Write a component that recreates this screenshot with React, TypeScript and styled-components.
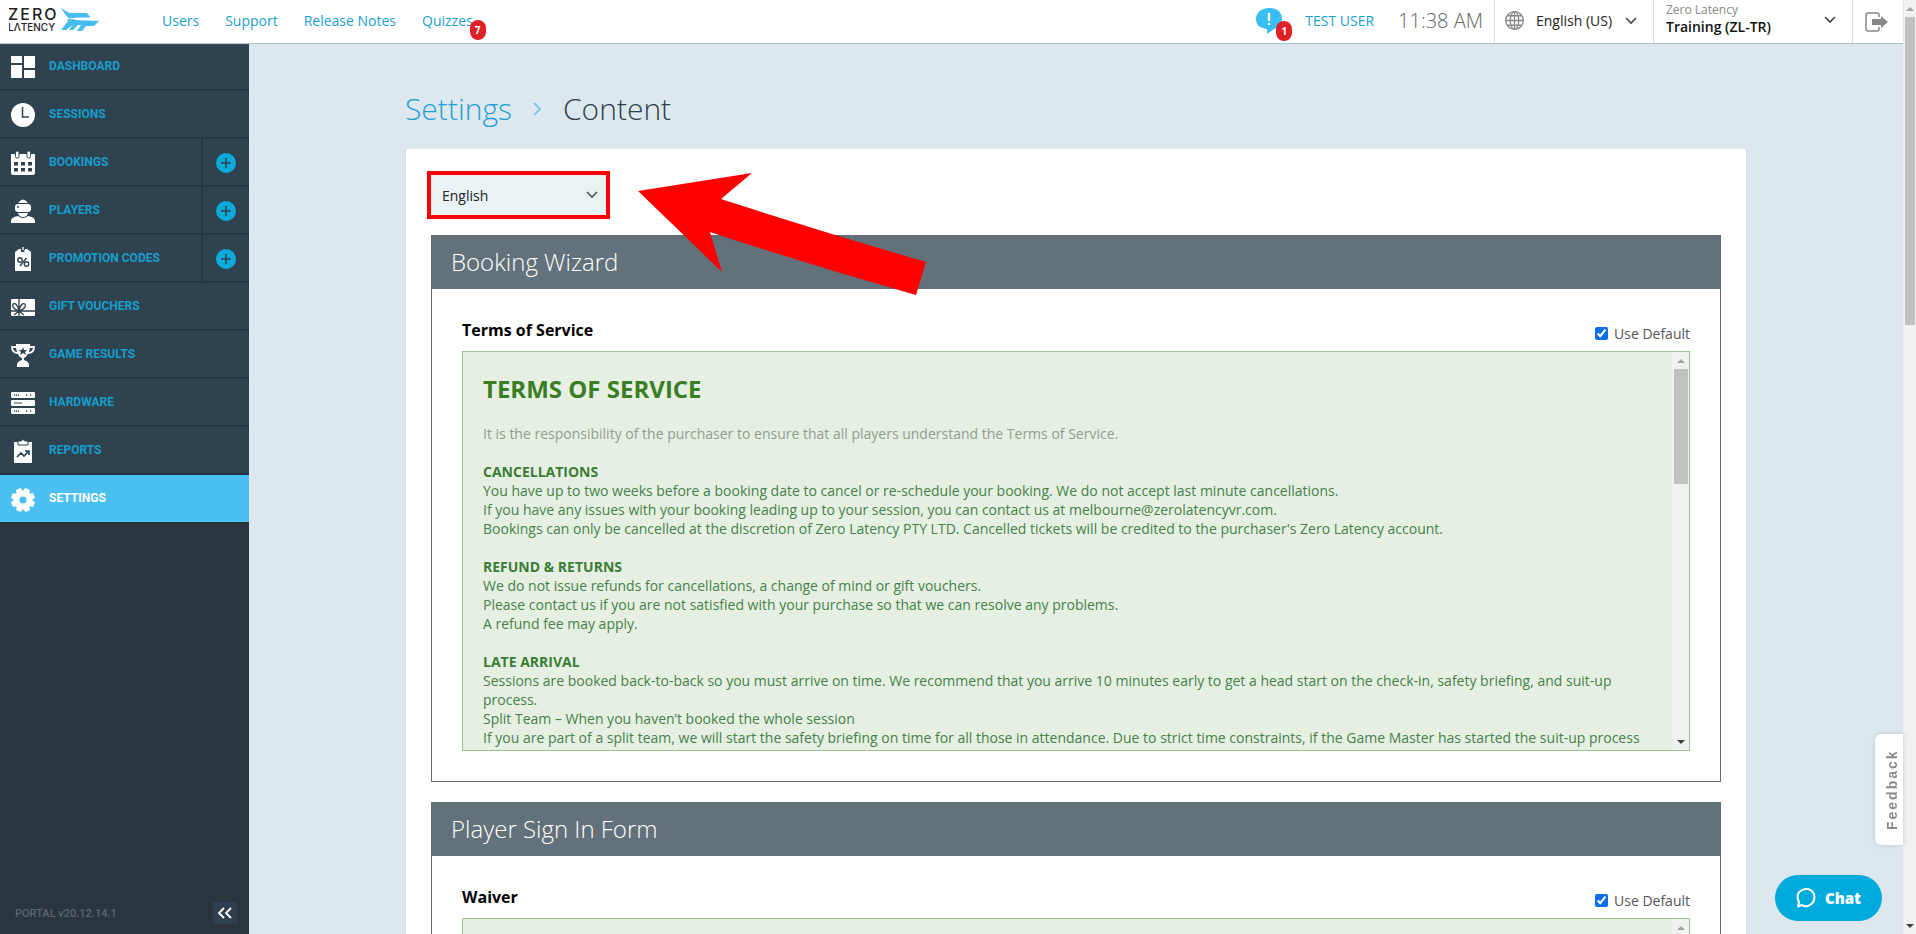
import React from "react";
import styled, { createGlobalStyle, css } from "styled-components";

const sans = `"Open Sans", "Noto Sans", sans-serif`;

const GlobalStyle = createGlobalStyle`
  *, *::before, *::after { box-sizing: border-box; }
  body { margin: 0; font-family: ${sans}; font-size: 14px; line-height: 19px; color: #333; background: #dde8ee; }
  h1, h2, h3, h4, p { margin: 0; }
  button { font: inherit; border: 0; padding: 0; cursor: pointer; }
  a { text-decoration: none; }
`;

/* ---------- shell ---------- */
const Window = styled.div`
  display: flex;
  height: 100vh;
  overflow: hidden;
`;
const Shell = styled.div`
  flex: 1;
  min-width: 0;
  display: flex;
  flex-direction: column;
`;
const Body = styled.div`
  flex: 1;
  min-height: 0;
  display: flex;
`;

/* ---------- scroll bars ---------- */
const Track = styled.div<{ $inner?: boolean }>`
  flex: none;
  display: flex;
  flex-direction: column;
  align-items: center;
  width: ${(p) => (p.$inner ? 17 : 13)}px;
  background: #f1f1f1;
`;
const Thumb = styled.div<{ $size: number }>`
  width: calc(100% - 3px);
  height: ${(p) => p.$size}%;
  background: #c1c1c1;
`;
const Spacer = styled.div`
  flex: 1;
`;
const Step = styled.button`
  display: grid;
  place-items: center;
  width: 100%;
  height: 17px;
  background: transparent;
`;

function ScrollBar({ size, inner }: { size: number; inner?: boolean }) {
  return (
    <Track $inner={inner}>
      <Step aria-label="Scroll up">
        <svg width="8" height="4" viewBox="0 0 8 4"><path d="M0 4 4 0l4 4z" fill="#a3a3a3" /></svg>
      </Step>
      <Thumb $size={size} />
      <Spacer />
      <Step aria-label="Scroll down">
        <svg width="8" height="4" viewBox="0 0 8 4"><path d="M0 0l4 4 4-4z" fill="#404040" /></svg>
      </Step>
    </Track>
  );
}

/* ---------- header ---------- */
const Header = styled.header`
  position: relative;
  z-index: 2;
  flex: none;
  display: flex;
  height: 43px;
  background: #fff;
  box-shadow: 0 1px 1px #b4c4ce;
`;
const LogoLink = styled.a`
  width: 162px;
  padding: 1px 0 0 9px;
`;
const TopNav = styled.nav`
  flex: 1;
  display: flex;
  align-items: center;
  gap: 26px;
  padding-bottom: 2px;
`;
const TopLink = styled.a`
  position: relative;
  color: #1a9fd0;
`;
const Badge = styled.span`
  position: absolute;
  right: -13px;
  bottom: -10px;
  display: grid;
  place-items: center;
  width: 16px;
  height: 20px;
  border-radius: 8px;
  background: #e01f26;
  color: #fff;
  font-size: 10px;
  font-weight: 700;
`;
const Notice = styled.button`
  position: relative;
  width: 27px;
  margin-right: 22px;
  background: transparent;

  svg { display: block; margin-top: -2px; }
  ${Badge} { right: -9px; bottom: 2px; }
`;
const UserLink = styled.a`
  align-self: center;
  margin-right: 24px;
  padding-bottom: 2px;
  color: #1a9fd0;
`;
const Clock = styled.span`
  align-self: center;
  margin-right: 11px;
  padding-bottom: 3px;
  font-size: 20px;
  font-weight: 300;
  color: #666;
`;
const Cell = styled.div<{ $width: number }>`
  display: flex;
  align-items: center;
  width: ${(p) => p.$width}px;
  padding: 0 12px;
  border-left: 1px solid #d9dde0;
`;
const PlainSelect = styled.select`
  flex: 1;
  min-width: 0;
  appearance: none;
  border: 0;
  padding: 0;
  background: transparent;
  font: 14px/19px ${sans};
  color: #222;
`;
const LanguageCell = styled(Cell)`
  gap: 12px;
  padding: 0 16px 2px 10px;
`;
const SiteCell = styled(Cell)`
  padding-right: 16px;

  > svg { margin-bottom: 4px; }
`;
const Site = styled.label`
  flex: 1;
  display: flex;
  flex-direction: column;
  font-size: 12px;
  line-height: 14px;
  padding-bottom: 4px;
  color: #888;

  ${PlainSelect} { font-weight: 600; line-height: 19px; color: #111; }
`;
const LogoutButton = styled.button`
  display: grid;
  place-items: center;
  background: transparent;
`;

const Chevron = ({ color = "#444" }: { color?: string }) => (
  <svg width="12" height="8" viewBox="0 0 12 8" fill="none" stroke={color} strokeWidth="1.6">
    <path d="M1 1l5 5 5-5" />
  </svg>
);

const Logo = () => (
  <svg width="92" height="34" viewBox="0 -6 92 34">
    <g fill="#222" fontFamily="Inter, sans-serif" fontWeight="500">
      <text x="-1" y="13" fontSize="16" letterSpacing="2">ZERO</text>
      <text x="-1" y="24" fontSize="10">LΛTENCY</text>
    </g>
    <g fill="#45bdee">
      <path d="M52 1l8 5h18l4 5H65l-5 2z" />
      <path d="M52 23l7-9 5-1 26 1-5 5h-8l-4 5h-5l4-6h-3l-5 5h-4l4-5-7 5z" />
    </g>
    <path d="M54 6l6 6 8-1h15" fill="none" stroke="#fff" />
    <path d="M58 13h8" stroke="#1b9bd0" />
  </svg>
);

/* ---------- sidebar ---------- */
const Sidebar = styled.aside`
  flex: none;
  display: flex;
  flex-direction: column;
  justify-content: space-between;
  width: 249px;
  background: #2b353e;
`;
const Menu = styled.ul`
  margin: 0;
  padding: 0;
  list-style: none;
`;
const MenuItem = styled.li<{ $active?: boolean }>`
  display: flex;
  height: 48px;
  border-bottom: 2px solid #253641;
  background: #2e4250;
  ${(p) => p.$active && css`
    border-bottom: 0;
    height: 47px;
    background: #4bc0f0;
    ${MenuLink} { color: #fff; }
  `}
`;
const MenuLink = styled.a`
  flex: 1;
  display: flex;
  align-items: center;
  gap: 14px;
  padding-left: 11px;
  color: #179ecb;
  font-family: Roboto, sans-serif;
  font-size: 12px;
  font-weight: 700;

  svg { flex: none; margin-top: 2px; }
`;
const AddButton = styled.button`
  display: grid;
  place-items: center;
  width: 48px;
  padding-top: 2px;
  border-left: 2px solid #253641;
  background: transparent;
`;
const SidebarFoot = styled.footer`
  display: flex;
  align-items: center;
  justify-content: space-between;
  padding: 0 12px 10px 15px;
  color: #5c6770;
  font-family: Roboto, sans-serif;
  font-size: 11px;
  font-weight: 500;
`;
const CollapseButton = styled.button`
  display: grid;
  place-items: center;
  width: 24px;
  height: 22px;
  background: #2f3f4d;
`;

const ink = "#2e4250";
const icons: Record<string, React.ReactNode> = {
  dashboard: <path d="M0 1h11v7H0zM13 1h11v12H13zM0 10h11v13H0zM13 15h11v8H13z" />,
  sessions: (
    <>
      <circle cx="12" cy="12" r="12" />
      <path d="M11.500 4v10H18" fill="none" stroke={ink} strokeWidth="1.5" />
    </>
  ),
  bookings: (
    <>
      <path d="M0 3h24v19q0 2-2 2H2q-2 0-2-2z" />
      <rect x="4.500" y="0" width="3.500" height="7" rx="1.500" stroke={ink} />
      <rect x="16" y="0" width="3.500" height="7" rx="1.500" stroke={ink} />
      <path d="M3 11h4v3.500H3zM10 11h4v3.500h-4zM17 11h4v3.500h-4zM3 17h4v3.500H3zM10 17h4v3.500h-4zM17 17h4v3.500h-4z" fill={ink} />
    </>
  ),
  players: (
    <>
      <path d="M7 4q5-7 10 0z" />
      <rect x="4" y="5" width="16" height="8" rx="3" />
      <path d="M7 14h10q-1 4-5 4t-5-4z" />
      <path d="M0 24v-2q0-4 7-5 5 4 10 0 7 1 7 5v2z" />
      <circle cx="7" cy="8" r="1" fill={ink} />
    </>
  ),
  promotions: (
    <>
      <path d="M4 5l4-3h8l4 3v19H4z" />
      <path d="M12 0v5" stroke={ink} strokeWidth="4" />
      <path d="M12 0v3M10 5q0 2 2 2t2-2V3" fill="none" stroke="#fff" strokeWidth="1.3" />
      <g fill="none" stroke={ink} strokeWidth="1.4">
        <circle cx="9" cy="13" r="2.200" /><circle cx="15.500" cy="17" r="2.200" /><path d="M15.500 11l-6.500 8" />
      </g>
    </>
  ),
  vouchers: (
    <>
      <rect y="4" width="24" height="17" rx="1" />
      <path d="M8 4v17M0 16h24M8 16Q0 13 2 9q4-2 6 7 2-9 6-7 2 4-6 7l-5 4M8 16l5 4" fill="none" stroke={ink} strokeWidth="1.3" />
    </>
  ),
  results: (
    <>
      <path d="M5 1h14v2h5q0 8-7 8-2 3-4 4v2q4 1 5 4v3H6v-3q1-3 5-4v-2q-3-1-4-4-7 0-7-8h5z" />
      <path d="M2 5h3l1 4Q3 9 2 5zM22 5h-3l-1 4q3 0 4-4z" fill={ink} />
      <path d="M12 4l1 3h3l-2 2 1 3-3-2-3 2 1-3-2-2h3z" fill={ink} />
    </>
  ),
  hardware: (
    <>
      <rect y="1" width="24" height="6" rx="1" />
      <rect y="9" width="24" height="6" rx="1" />
      <rect y="17" width="24" height="6" rx="1" />
      <path d="M3 4h5M15 4h2M19 4h2M3 20h5M15 20h2M19 20h2" stroke={ink} strokeWidth="1.6" strokeDasharray="1.2 .8" />
      <path d="M3 12h8" stroke={ink} />
    </>
  ),
  reports: (
    <>
      <path d="M3 3h18v21H3z" />
      <path d="M7 2h3q2-3 4 0h3v4H7z" stroke={ink} />
      <path d="M6 18l4-4 3 3 5-5M14 12h4v4" fill="none" stroke={ink} strokeWidth="1.6" />
    </>
  ),
  settings: (
    <>
      <circle cx="12" cy="12" r="9.500" />
      {[22, 67, 112, 157, 202, 247, 292, 337].map((a) => (
        <rect key={a} x="9" y="0" width="6" height="6" rx="1.500" transform={`rotate(${a} 12 12)`} />
      ))}
      <circle cx="12" cy="12" r="3.600" fill="#4bc0f0" />
    </>
  ),
};

const menu = [
  { icon: "dashboard", label: "DASHBOARD" },
  { icon: "sessions", label: "SESSIONS" },
  { icon: "bookings", label: "BOOKINGS", add: true },
  { icon: "players", label: "PLAYERS", add: true },
  { icon: "promotions", label: "PROMOTION CODES", add: true },
  { icon: "vouchers", label: "GIFT VOUCHERS" },
  { icon: "results", label: "GAME RESULTS" },
  { icon: "hardware", label: "HARDWARE" },
  { icon: "reports", label: "REPORTS" },
  { icon: "settings", label: "SETTINGS", active: true },
];

/* ---------- content ---------- */
const Main = styled.main`
  flex: 1;
  min-width: 0;
  overflow: hidden;
`;
const Column = styled.div`
  max-width: 1342px;
  margin: 0 auto;
`;
const Crumbs = styled.nav`
  display: flex;
  align-items: center;
  gap: 21px;
  height: 106px;
  padding-top: 26px;
  font-size: 30px;
  line-height: 40px;
  font-weight: 300;

  a { color: #1f9fd6; }
  h1 { font: inherit; color: #2d3e4c; }
`;
const Card = styled.section`
  display: flex;
  flex-direction: column;
  gap: 20px;
  padding: 26px 25px;
  border: 1px solid #d0dde5;
  border-top: 0;
  background: #fff;
`;
const Picker = styled.div`
  position: relative;
  align-self: flex-start;
  display: flex;
  align-items: center;
  width: 175px;
  height: 40px;
  padding: 0 8px 0 11px;
  outline: 4px solid #f00;
  background: #e9f2f5;
`;
const Pointer = styled.svg`
  position: absolute;
  left: 206px;
  top: -4px;
  width: 290px;
  height: 126px;
  pointer-events: none;
`;
const Panel = styled.section`
  border: 1px solid #5f6e75;
`;
const PanelTitle = styled.h2`
  padding: 9px 19px 11px;
  background: #62717a;
  color: #fff;
  font-size: 24px;
  font-weight: 300;
  line-height: 33px;
`;
const PanelBody = styled.div`
  padding: 29px 30px 30px;
`;
const FieldHead = styled.div`
  display: flex;
  justify-content: space-between;
  align-items: flex-start;
  height: 33px;

  h3 { font-size: 16px; font-weight: 700; line-height: 24px; color: #000; }
`;
const Check = styled.label`
  display: flex;
  align-items: center;
  gap: 6px;
  padding-top: 6px;
  color: #555;

  input { width: 13px; height: 13px; margin: 0; accent-color: #0d6fe8; }
`;
const Document = styled.div`
  display: flex;
  height: 400px;
  border: 1px solid #9dc38f;
  background: #e5f0e3;
  color: #47804a;
`;
const DocumentText = styled.div`
  flex: 1;
  min-width: 0;
  overflow: hidden;
  padding: 20px;

  h3 { margin-bottom: 19px; font-size: 24px; line-height: 33px; color: #3a7d25; }
  h4 { font-size: 14px; line-height: 19px; color: #3a7d35; }
  p { margin-bottom: 19px; }
`;
const Intro = styled.p`
  color: #939b90;
`;

/* ---------- floating controls ---------- */
const FeedbackTab = styled.button`
  position: fixed;
  right: 13px;
  bottom: 89px;
  width: 28px;
  height: 111px;
  padding-right: 7px;
  border-radius: 0 6px 6px 0;
  background: #fff;
  box-shadow: 0 0 5px #b9c6ce;
  color: #8a8a8a;
  font-family: "Liberation Sans", sans-serif;
  font-weight: 700;
  letter-spacing: 2px;
  line-height: 14px;
  writing-mode: vertical-rl;
  transform: rotate(180deg);
`;
const ChatButton = styled.button`
  position: fixed;
  right: 34px;
  bottom: 13px;
  display: flex;
  align-items: center;
  justify-content: center;
  gap: 9px;
  width: 107px;
  height: 46px;
  border-radius: 23px;
  background: #00abdc;
  color: #fff;
  font-size: 15px;
  font-weight: 800;
`;

function Section({ title, field, children }: { title: string; field: string; children?: React.ReactNode }) {
  return (
    <Panel>
      <PanelTitle>{title}</PanelTitle>
      <PanelBody>
        <FieldHead>
          <h3>{field}</h3>
          <Check><input type="checkbox" defaultChecked />Use Default</Check>
        </FieldHead>
        <Document>
          <DocumentText>{children}</DocumentText>
          <ScrollBar size={29} inner />
        </Document>
      </PanelBody>
    </Panel>
  );
}

export default function App() {
  return (
    <Window>
      <GlobalStyle />
      <Shell>
        <Header>
          <LogoLink href="#" aria-label="Zero Latency"><Logo /></LogoLink>
          <TopNav>
            <TopLink href="#">Users</TopLink>
            <TopLink href="#">Support</TopLink>
            <TopLink href="#">Release Notes</TopLink>
            <TopLink href="#">Quizzes<Badge>7</Badge></TopLink>
          </TopNav>
          <Notice aria-label="Notifications">
            <svg width="27" height="26" viewBox="0 0 27 26">
              <path d="M13 0C21 0 26 4 26 11S21 20 18 21l-7 5V21C4 20 0 17 0 11S5 0 13 0z" fill="#38bdf5" />
              <path d="M13 5v8M13 15v2" stroke="#fff" strokeWidth="2.4" />
            </svg>
            <Badge>1</Badge>
          </Notice>
          <UserLink href="#">TEST USER</UserLink>
          <Clock>11:38 AM</Clock>
          <LanguageCell $width={159}>
            <svg width="19" height="19" viewBox="0 0 18 18" fill="none" stroke="#888" strokeWidth="1.2">
              <circle cx="9" cy="9" r="8.400" /><ellipse cx="9" cy="9" rx="4" ry="8.400" />
              <path d="M9 0v18M.6 9h17M2 4.500h14M2 13.500h14" />
            </svg>
            <PlainSelect aria-label="Language"><option>English (US)</option></PlainSelect>
            <Chevron />
          </LanguageCell>
          <SiteCell $width={199}>
            <Site>
              Zero Latency
              <PlainSelect><option>Training (ZL-TR)</option></PlainSelect>
            </Site>
            <Chevron />
          </SiteCell>
          <Cell $width={51}>
            <LogoutButton aria-label="Log out">
              <svg width="24" height="20" viewBox="0 0 24 20">
                <path d="M14 5V3q0-2-2-2H3Q1 1 1 3v14q0 2 2 2h9q2 0 2-2v-2" fill="none" stroke="#888" strokeWidth="1.5" />
                <path d="M7 7h9V4l7 6-7 6v-3H7z" fill="#888" />
              </svg>
            </LogoutButton>
          </Cell>
        </Header>
        <Body>
          <Sidebar>
            <Menu>
              {menu.map((m) => (
                <MenuItem key={m.label} $active={m.active}>
                  <MenuLink href="#">
                    <svg width="24" height="24" viewBox="0 0 24 24" fill="#fff">{icons[m.icon]}</svg>
                    {m.label}
                  </MenuLink>
                  {m.add && (
                    <AddButton aria-label={`Add ${m.label}`}>
                      <svg width="20" height="20" viewBox="0 0 20 20">
                        <circle cx="10" cy="10" r="10" fill="#0cabdc" />
                        <path d="M10 5v10M5 10h10" stroke={ink} strokeWidth="1.6" />
                      </svg>
                    </AddButton>
                  )}
                </MenuItem>
              ))}
            </Menu>
            <SidebarFoot>
              PORTAL v20.12.14.1
              <CollapseButton aria-label="Collapse menu">
                <svg width="16" height="12" viewBox="0 0 16 12" fill="none" stroke="#fff" strokeWidth="1.8">
                  <path d="M7 1L2 6l5 5M14 1L9 6l5 5" />
                </svg>
              </CollapseButton>
            </SidebarFoot>
          </Sidebar>
          <Main>
            <Column>
              <Crumbs aria-label="Breadcrumb">
                <a href="#">Settings</a>
                <svg width="9" height="14" viewBox="0 0 9 14" fill="none" stroke="#63bfe3" strokeWidth="1.5">
                  <path d="M1 1l6 6-6 6" />
                </svg>
                <h1>Content</h1>
              </Crumbs>
              <Card>
                <Picker>
                  <PlainSelect aria-label="Content language"><option>English</option></PlainSelect>
                  <Chevron color="#555" />
                  <Pointer viewBox="0 0 290 126" aria-hidden="true">
                    <path d="M1 20L115 2 84 28Q186 61 289 91L279 124Q176 95 73 61L85 101z" fill="#f00" />
                  </Pointer>
                </Picker>
                <Section title="Booking Wizard" field="Terms of Service">
                  <h3>TERMS OF SERVICE</h3>
                  <Intro>It is the responsibility of the purchaser to ensure that all players understand the Terms of Service.</Intro>
                  <h4>CANCELLATIONS</h4>
                  <p>
                    You have up to two weeks before a booking date to cancel or re-schedule your booking. We do not accept last minute cancellations.<br />
                    If you have any issues with your booking leading up to your session, you can contact us at melbourne@zerolatencyvr.com.<br />
                    Bookings can only be cancelled at the discretion of Zero Latency PTY LTD. Cancelled tickets will be credited to the purchaser's Zero Latency account.
                  </p>
                  <h4>REFUND &amp; RETURNS</h4>
                  <p>
                    We do not issue refunds for cancellations, a change of mind or gift vouchers.<br />
                    Please contact us if you are not satisfied with your purchase so that we can resolve any problems.<br />
                    A refund fee may apply.
                  </p>
                  <h4>LATE ARRIVAL</h4>
                  <p>
                    Sessions are booked back-to-back so you must arrive on time. We recommend that you arrive 10 minutes early to get a head start on the check-in, safety briefing, and suit-up process.<br />
                    Split Team – When you haven’t booked the whole session<br />
                    If you are part of a split team, we will start the safety briefing on time for all those in attendance. Due to strict time constraints, if the Game Master has started the suit-up process
                  </p>
                </Section>
                <Section title="Player Sign In Form" field="Waiver" />
              </Card>
            </Column>
          </Main>
        </Body>
      </Shell>
      <ScrollBar size={33} />
      <FeedbackTab>Feedback</FeedbackTab>
      <ChatButton>
        <svg width="20" height="20" viewBox="0 0 20 20" fill="none" stroke="#fff" strokeWidth="2">
          <path d="M3 14Q-1 6 6 2q8-3 12 4 2 9-6 12-3 1-6-1l-4 1.500z" strokeLinejoin="round" />
        </svg>
        Chat
      </ChatButton>
    </Window>
  );
}
